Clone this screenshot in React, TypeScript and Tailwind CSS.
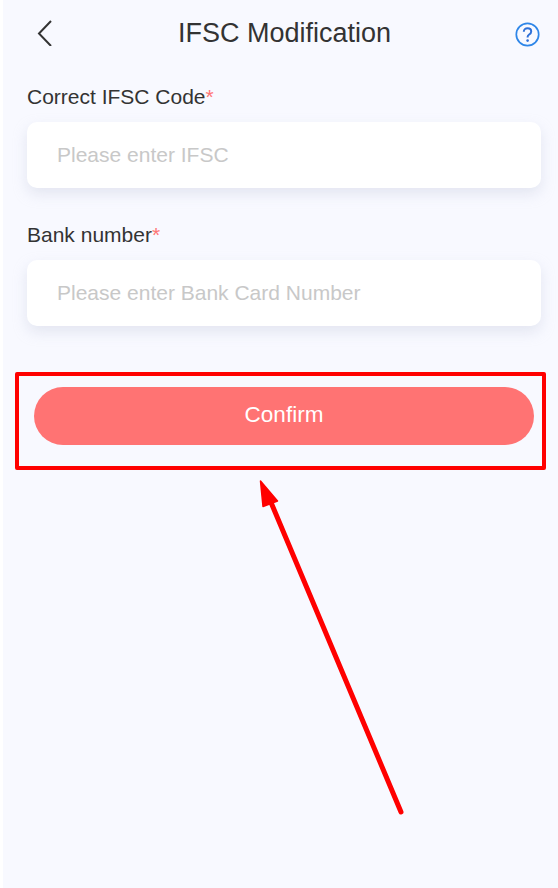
import { useState } from 'react';

// Single labelled input card
function Field({ label, placeholder }: { label: string; placeholder: string }) {
  const [value, setValue] = useState('');
  return (
    <div>
      <label className="block h-[30px] text-[21px] leading-[30px] text-[#333333]">
        {label}
        <span className="text-[#ff7575]">*</span>
      </label>
      <div className="mt-[10px] h-[66px] rounded-[10px] bg-white shadow-[0_6px_14px_rgba(190,195,215,0.35)]">
        <input
          value={value}
          onChange={(e) => setValue(e.target.value)}
          placeholder={placeholder}
          className="h-full w-full bg-transparent pl-[30px] text-[21px] text-[#333333] outline-none placeholder:text-[#c8c8c8]"
        />
      </div>
    </div>
  );
}

export default function App() {
  return (
    <div className="relative h-[888px] w-[558px] overflow-hidden bg-white font-['Liberation_Sans',Arial,sans-serif]">
      <div className="ml-[3px] h-full bg-[#f8f9ff]">
        {/* Header */}
        <header className="flex h-[66px] items-center justify-between pl-[33px] pr-[17px]">
          <button type="button" aria-label="Back" className="flex h-[28px] w-[18px] items-center">
            <svg width="16" height="26" viewBox="0 0 16 26" fill="none">
              <path d="M15 1 3 13.5 15 26" stroke="#333333" strokeWidth="2" />
            </svg>
          </button>
          <h1 className="text-[27px] font-normal text-[#333333]">IFSC Modification</h1>
          <button type="button" aria-label="Help" className="mt-[2px] flex h-[26px] w-[26px] items-center justify-center">
            <svg width="25" height="25" viewBox="0 0 25 25" fill="none">
              <circle cx="12.5" cy="12.5" r="11.2" stroke="#2e86e8" strokeWidth="1.7" />
              <path d="M8.8 9.8c0-2.3 1.6-3.6 3.7-3.6s3.7 1.3 3.7 3.2c0 1.6-.9 2.3-2 3.1-1 .7-1.6 1.3-1.6 2.6v.4" stroke="#2e70d8" strokeWidth="2" />
              <circle cx="12.6" cy="18.6" r="1.3" fill="#2e70d8" />
            </svg>
          </button>
        </header>

        {/* Form */}
        <div className="flex flex-col gap-[32px] pl-[24px] pr-[17px] pt-[16px]">
          <Field label="Correct IFSC Code" placeholder="Please enter IFSC" />
          <Field label="Bank number" placeholder="Please enter Bank Card Number" />
        </div>

        <div className="pl-[31px] pr-[24px] pt-[61px]">
          <button
            type="button"
            className="h-[58px] w-full rounded-full bg-[#ff7373] pb-[2px] text-[22.5px] text-white"
          >
            Confirm
          </button>
        </div>
      </div>

      {/* Red annotation drawn over the screenshot */}
      <div className="absolute left-[15px] top-[372px] h-[98px] w-[531px] rounded-[2px] border-[4px] border-[#ff0000]" />
      <svg className="absolute left-0 top-0" width="558" height="888" viewBox="0 0 558 888" fill="none">
        <path d="M401 812 270 500" stroke="#ff0000" strokeWidth="5" strokeLinecap="round" />
        <path d="M260.5 481 263 506.5 277.5 501Z" fill="#ff0000" stroke="#ff0000" strokeWidth="1.5" strokeLinejoin="round" />
      </svg>
    </div>
  );
}
